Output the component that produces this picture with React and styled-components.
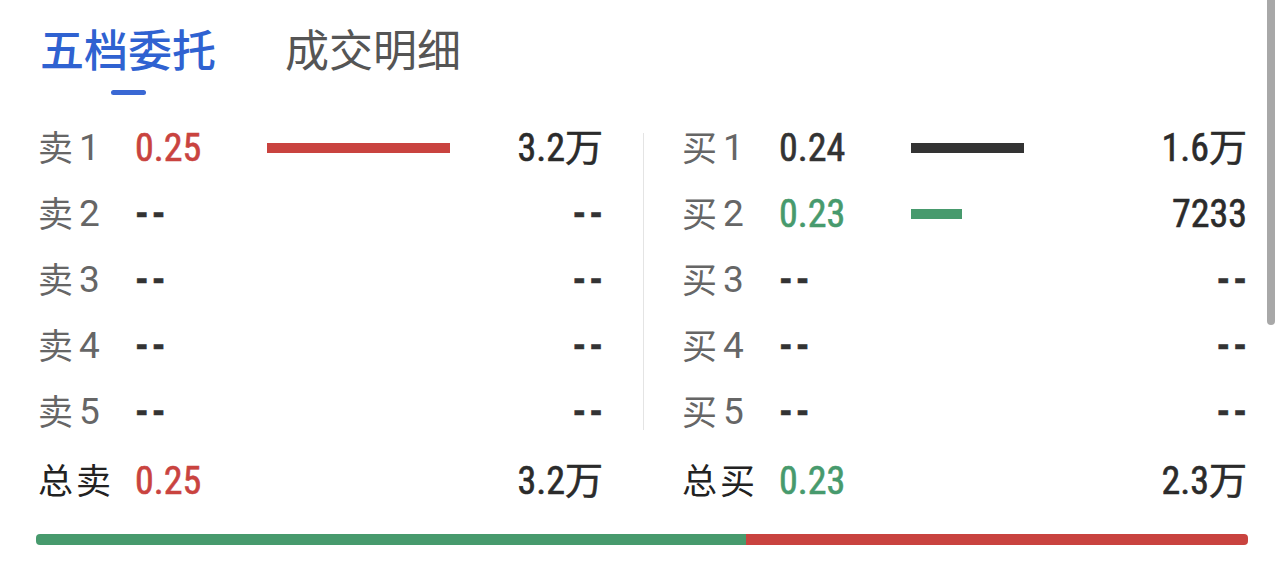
import styled, { createGlobalStyle } from "styled-components";

const tones = {
  up: "#c9433f",
  down: "#479a6d",
  flat: "#333333",
};

const sells = [
  { side: "卖", level: 1, price: "0.25", qty: "3.2万", bar: 183, tone: "up" },
  { side: "卖", level: 2 },
  { side: "卖", level: 3 },
  { side: "卖", level: 4 },
  { side: "卖", level: 5 },
];

const buys = [
  { side: "买", level: 1, price: "0.24", qty: "1.6万", bar: 113, tone: "flat" },
  { side: "买", level: 2, price: "0.23", qty: "7233", bar: 51, tone: "down" },
  { side: "买", level: 3 },
  { side: "买", level: 4 },
  { side: "买", level: 5 },
];

const totalSell = 32360;
const totalBuy = 22860;

function Level({ item }) {
  return (
    <Row>
      <Label>
        {item.side}
        <LevelNo>{item.level}</LevelNo>
      </Label>
      {item.price ? (
        <>
          <Price $tone={item.tone}>{item.price}</Price>
          <Bar $tone={item.tone} $w={item.bar} />
          <Qty>{item.qty}</Qty>
        </>
      ) : (
        <>
          <Empty>--</Empty>
          <span />
          <Empty $right>--</Empty>
        </>
      )}
    </Row>
  );
}

export default function App() {
  const sellShare = (totalSell / (totalSell + totalBuy)) * 100;

  return (
    <>
      <GlobalStyle />
      <Page>
        <Tabs>
          <Tab $active>
            五档委托
            <Indicator />
          </Tab>
          <Tab>成交明细</Tab>
        </Tabs>

        <Book>
          <Side>
            {sells.map((s) => (
              <Level key={s.level} item={s} />
            ))}
          </Side>
          <Divider />
          <Side>
            {buys.map((b) => (
              <Level key={b.level} item={b} />
            ))}
          </Side>

          <Row $total>
            <Label $strong>总卖</Label>
            <Price $tone="up">0.25</Price>
            <span />
            <Qty>3.2万</Qty>
          </Row>
          <span />
          <Row $total>
            <Label $strong>总买</Label>
            <Price $tone="down">0.23</Price>
            <span />
            <Qty>2.3万</Qty>
          </Row>
        </Book>

        <Ratio>
          <Segment $color={tones.down} style={{ width: `${sellShare}%` }} />
          <Segment $color={tones.up} style={{ width: `${100 - sellShare}%` }} />
        </Ratio>

        <Scrollbar />
      </Page>
    </>
  );
}

const GlobalStyle = createGlobalStyle`
  html, body {
    margin: 0;
    padding: 0;
    background: #ffffff;
  }
  * {
    box-sizing: border-box;
  }
`;

const Page = styled.div`
  position: relative;
  width: 1284px;
  height: 565px;
  overflow: hidden;
  background: #ffffff;
  font-family: Roboto, "Noto Sans CJK SC", sans-serif;
`;

const Tabs = styled.nav`
  display: flex;
  gap: 69px;
  padding: 20px 0 0 40px;
`;

const Tab = styled.div`
  display: flex;
  flex-direction: column;
  align-items: center;
  font-family: "Noto Sans CJK SC", sans-serif;
  font-size: 44px;
  line-height: 56px;
  font-weight: ${(p) => (p.$active ? 500 : 400)};
  color: ${(p) => (p.$active ? "#2f62d1" : "#555555")};
`;

const Indicator = styled.span`
  width: 35px;
  height: 5px;
  margin-top: 14px;
  border-radius: 3px;
  background: #3a68d4;
`;

const Book = styled.section`
  display: grid;
  grid-template-columns: 1fr 1px 1fr;
  column-gap: 40px;
  padding: 0 37px 0 40px;
  margin-top: 20px;
`;

const Side = styled.div`
  display: flex;
  flex-direction: column;
`;

const Divider = styled.div`
  background: #e4e4e4;
  margin: 18px 0 15px;
`;

const Row = styled.div`
  display: grid;
  grid-template-columns: 95px 132px 1fr auto;
  align-items: center;
  height: 66px;
  margin-top: ${(p) => (p.$total ? "3px" : "0")};
`;

const Label = styled.span`
  display: flex;
  align-items: center;
  font-family: "Noto Sans CJK SC", sans-serif;
  font-size: 35px;
  line-height: 1;
  font-weight: 400;
  letter-spacing: ${(p) => (p.$strong ? "3px" : "0")};
  color: ${(p) => (p.$strong ? "#222222" : "#666666")};
  margin-left: -2px;
  margin-bottom: 6px;
`;

const LevelNo = styled.span`
  font-family: Roboto, sans-serif;
  font-size: 37px;
  font-weight: 400;
  margin-left: 6px;
  margin-top: 4px;
`;

const Num = styled.span`
  font-family: "Liberation Sans Narrow", "Roboto Condensed", Roboto,
    "Noto Sans CJK SC", sans-serif;
  font-size: 38px;
  font-weight: 400;
  line-height: 1;
  -webkit-text-stroke: 0.6px currentColor;
`;

const Price = styled(Num)`
  color: ${(p) => tones[p.$tone]};
`;

const Qty = styled(Num)`
  color: #2b2b2b;
  text-align: right;
`;

const Empty = styled(Num)`
  color: #333333;
  font-weight: 700;
  letter-spacing: 3px;
  text-align: ${(p) => (p.$right ? "right" : "left")};
  margin-right: ${(p) => (p.$right ? "-3px" : "0")};
`;

const Bar = styled.span`
  display: block;
  width: ${(p) => p.$w}px;
  height: 10px;
  background: ${(p) => tones[p.$tone]};
`;

const Ratio = styled.div`
  display: flex;
  height: 11px;
  margin: 20px 36px 0;
  border-radius: 4px;
  overflow: hidden;
`;

const Segment = styled.span`
  display: block;
  height: 100%;
  background: ${(p) => p.$color};
`;

const Scrollbar = styled.div`
  position: absolute;
  top: 0;
  right: 9px;
  width: 8px;
  height: 325px;
  border-radius: 0 0 4px 4px;
  background: #a8a8a8;
`;
